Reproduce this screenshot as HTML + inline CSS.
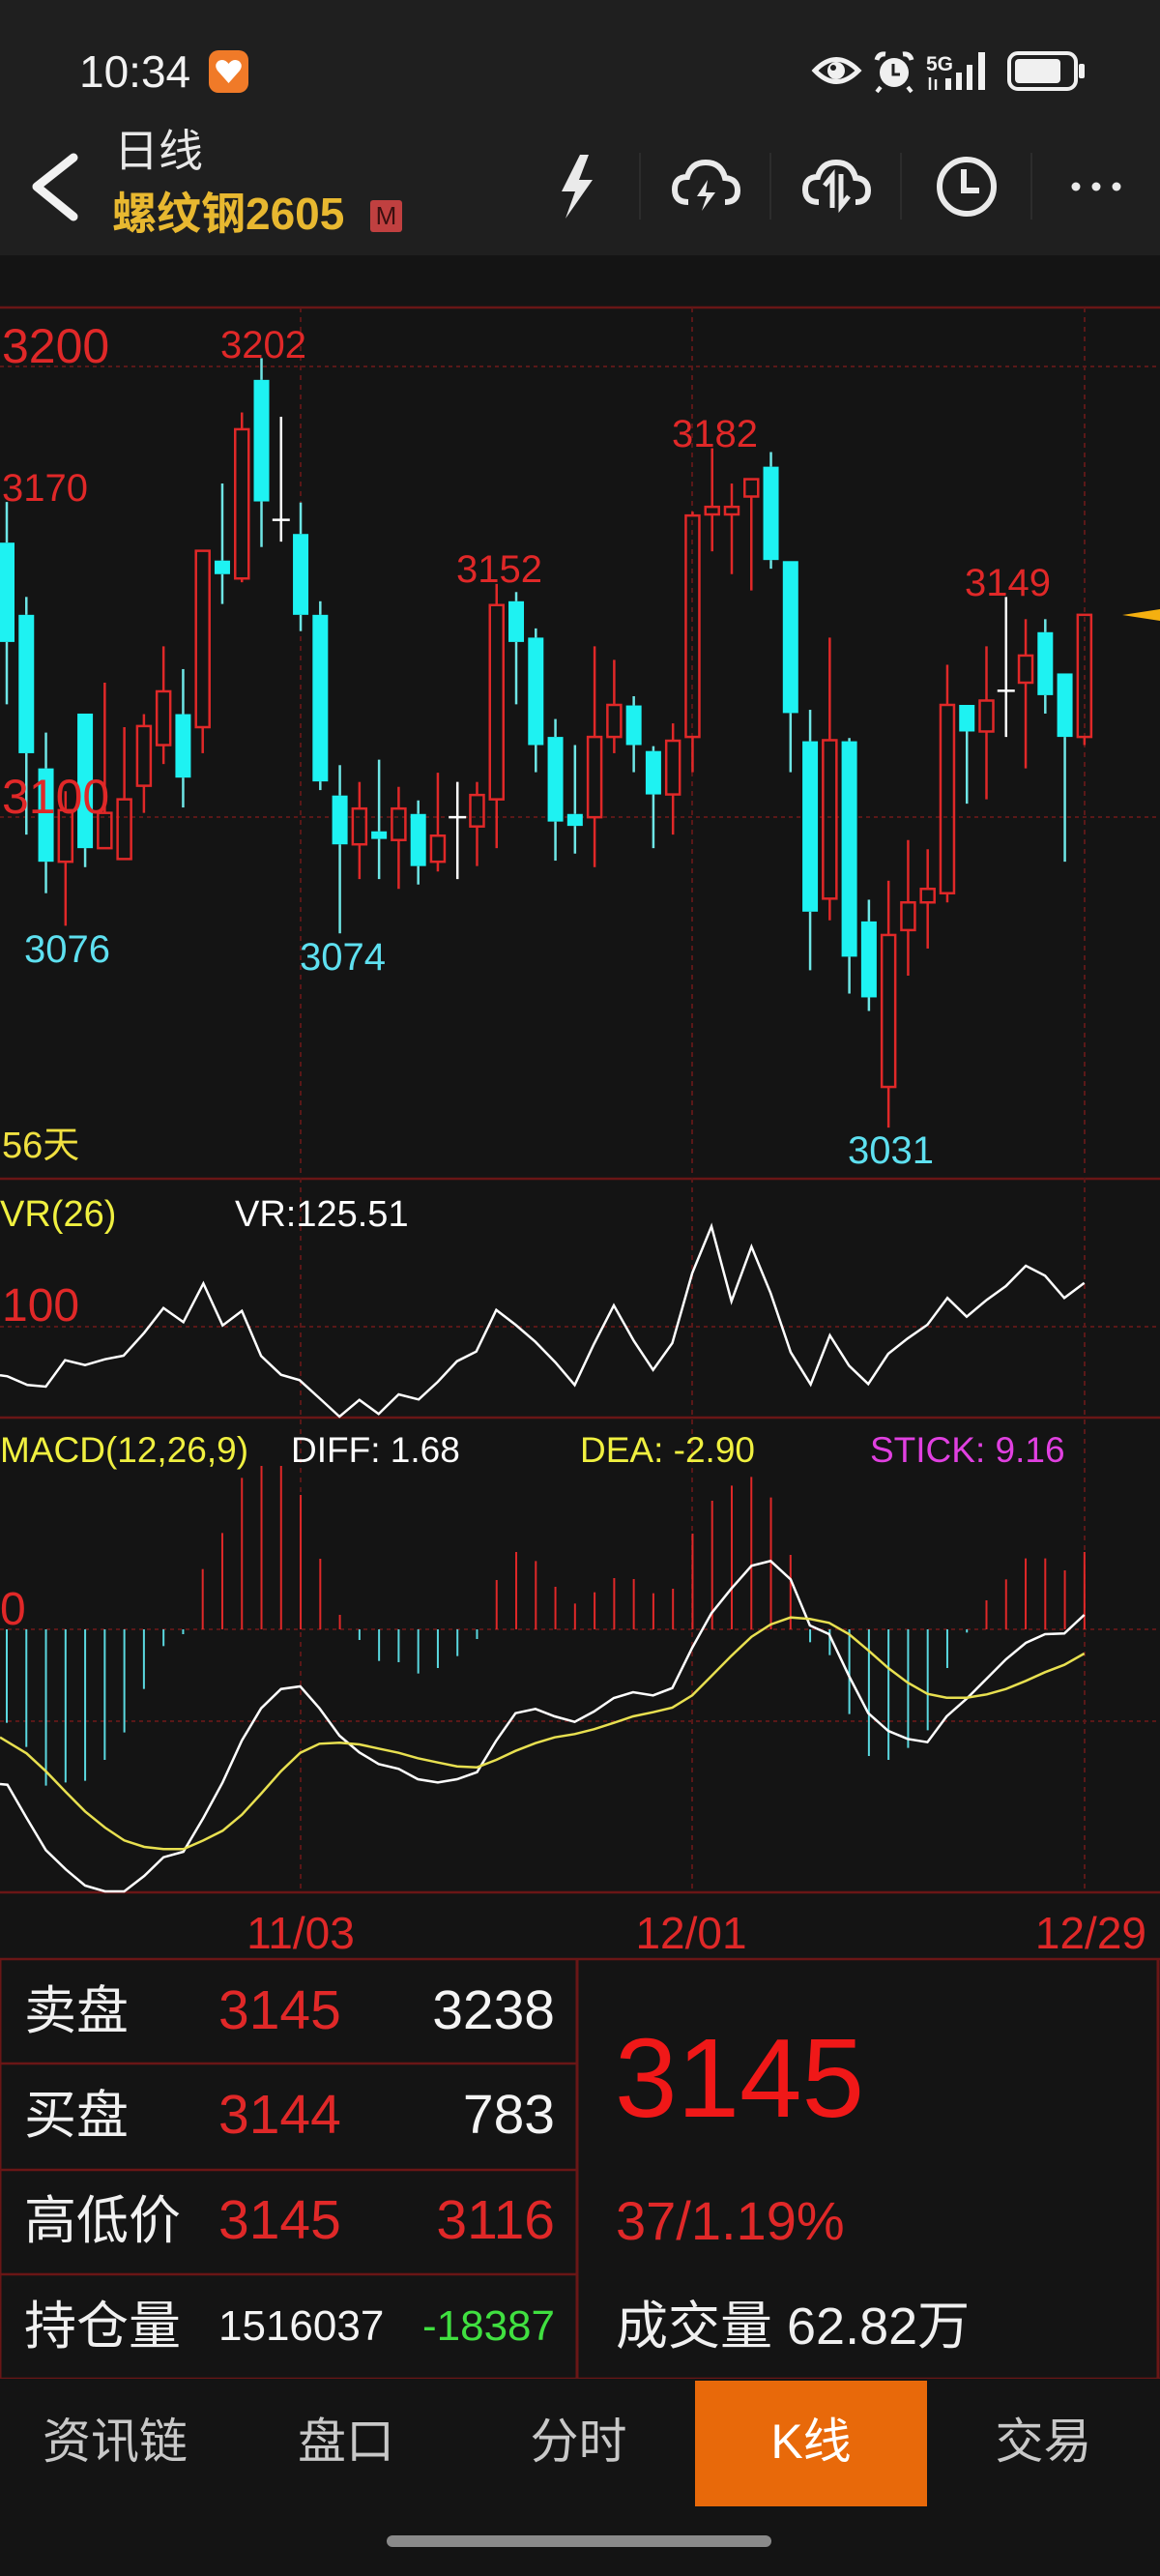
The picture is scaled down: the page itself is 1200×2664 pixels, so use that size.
<!DOCTYPE html>
<html><head><meta charset="utf-8">
<style>
*{margin:0;padding:0;box-sizing:border-box}
body{width:1200px;height:2664px;background:#141414;overflow:hidden;position:relative;font-family:"Liberation Sans","Noto Sans CJK SC",sans-serif}
.abs{position:absolute;white-space:nowrap}
#hdr{position:absolute;left:0;top:0;width:1200px;height:264px;background:#1f1f1f}
#nav{position:absolute;left:0;top:2460px;width:1200px;height:204px;background:#252525}
.tab{position:absolute;top:2462px;height:130px;line-height:126px;font-size:50px;color:#c8c8c8;text-align:center;font-family:"Liberation Sans","Noto Sans CJK SC",sans-serif}
</style></head><body>
<div id="hdr"></div>
<div class="abs" style="left:82px;top:44px;font-size:46px;color:#f2f2f2;line-height:60px">10:34</div>
<div class="abs" style="left:216px;top:52px;width:41px;height:44px;border-radius:10px;background:#f07a28"></div>
<svg class="abs" style="left:216px;top:52px" width="41" height="44" viewBox="0 0 41 44"><path d="M20.5 34 L9 21 Q5 15 10 11 Q16 8 20.5 14 Q25 8 31 11 Q36 15 32 21 Z" fill="#fff"/></svg>
<svg class="abs" style="left:830px;top:45px" width="300" height="56" viewBox="830 45 300 56">
<path d="M843 73 Q865 50 888 73 Q865 96 843 73 Z" fill="none" stroke="#f0f0f0" stroke-width="5"/>
<circle cx="865" cy="73" r="9" fill="#f0f0f0"/><circle cx="862" cy="70" r="3" fill="#1f1f1f"/>
<circle cx="925" cy="75" r="15" fill="#f0f0f0"/><path d="M924 66 V77 H931" stroke="#1f1f1f" stroke-width="3" fill="none"/>
<path d="M907 62 Q909 55 916 56 M943 62 Q941 55 934 56" stroke="#f0f0f0" stroke-width="5" fill="none"/>
<path d="M911 90 L907 95 M939 90 L943 95" stroke="#f0f0f0" stroke-width="4"/>
<text x="958" y="73" font-size="21" font-weight="bold" fill="#f0f0f0" font-family="Liberation Sans">5G</text>
<path d="M962 80 V93 M968 82 V93" stroke="#f0f0f0" stroke-width="2.5"/>
<rect x="978" y="81" width="6" height="12" fill="#f0f0f0"/><rect x="989" y="75" width="6" height="18" fill="#f0f0f0"/><rect x="1000" y="67" width="6" height="26" fill="#f0f0f0"/><rect x="1012" y="54" width="7" height="39" fill="#f0f0f0"/>
<rect x="1044" y="55" width="69" height="37" rx="9" fill="none" stroke="#f0f0f0" stroke-width="4"/>
<rect x="1050" y="61" width="47" height="25" rx="4" fill="#f0f0f0"/>
<rect x="1116" y="66" width="6" height="15" rx="2" fill="#f0f0f0"/>
</svg>
<svg class="abs" style="left:0;top:140px" width="1200" height="110" viewBox="0 140 1200 110">
<path d="M76 163 L38 193 L76 224" stroke="#f2f2f2" stroke-width="9" fill="none" stroke-linecap="round" stroke-linejoin="round"/>
<path d="M600 160 L581 198 L595 198 L585 226 L613 186 L599 186 L609 160 Z" fill="#eaeaea"/>
<g stroke="#2c2c2c" stroke-width="2"><path d="M662 158V227M797 158V227M932 158V227M1067 158V227"/></g>
<path d="M712 209 Q698 209 698 196 Q698 183 711 183 Q715 168 730 168 Q746 168 750 184 Q763 185 763 197 Q763 209 750 209" fill="none" stroke="#eaeaea" stroke-width="6"/>
<path d="M732 186 L721 203 L731 203 L726 218 L740 199 L730 199 Z" fill="#eaeaea"/>
<path d="M847 209 Q833 209 833 196 Q833 183 846 183 Q850 168 865 168 Q881 168 885 184 Q898 185 898 197 Q898 209 885 209" fill="none" stroke="#eaeaea" stroke-width="6"/>
<path d="M861 215 V182 L853 192 M870 180 V213 L878 203" fill="none" stroke="#eaeaea" stroke-width="5"/>
<circle cx="1000" cy="193" r="28" fill="none" stroke="#eaeaea" stroke-width="6"/>
<path d="M997 175 V197 H1013" fill="none" stroke="#eaeaea" stroke-width="6"/>
<circle cx="1113" cy="193" r="4.5" fill="#eaeaea"/><circle cx="1134" cy="193" r="4.5" fill="#eaeaea"/><circle cx="1155" cy="193" r="4.5" fill="#eaeaea"/>
</svg>
<div class="abs" style="left:118px;top:128px;font-size:46px;color:#e8e8e8;line-height:56px">日线</div>
<div class="abs" style="left:116px;top:193px;font-size:46px;color:#e8b830;font-weight:bold;line-height:56px">螺纹钢2605</div>
<div class="abs" style="left:383px;top:207px;width:33px;height:33px;background:#c04040;border-radius:3px;color:#3a1010;font-size:26px;line-height:33px;text-align:center">M</div>

<svg id="ch" class="abs" style="left:0;top:0" width="1200" height="2460" viewBox="0 0 1200 2460"></svg>

<div class="tab" style="left:0;width:238px">资讯链</div>
<div class="tab" style="left:238px;width:240px">盘口</div>
<div class="tab" style="left:478px;width:241px">分时</div>
<div class="abs" style="left:719px;top:2462px;width:240px;height:130px;background:#e8690a"></div>
<div class="tab" style="left:719px;width:240px;color:#fff">K线</div>
<div class="tab" style="left:959px;width:241px">交易</div>
<div class="abs" style="left:400px;top:2622px;width:398px;height:12px;border-radius:6px;background:#8a8a8a"></div>

<script>
var s='';
var R='#e02828',C='#1ef2f2';
function ln(x1,y1,x2,y2,c,w,d){s+='<line x1="'+x1+'" y1="'+y1+'" x2="'+x2+'" y2="'+y2+'" stroke="'+c+'" stroke-width="'+w+'"'+(d?' stroke-dasharray="'+d+'"':'')+'/>';}
function tx(x,y,t,c,fs,a){s+='<text x="'+x+'" y="'+y+'" fill="'+c+'" font-size="'+fs+'" font-family="Liberation Sans,Noto Sans CJK SC,sans-serif"'+(a?' text-anchor="'+a+'"':'')+'>'+t+'</text>';}
// panel borders
s+='<rect x="0" y="264" width="1200" height="1762" fill="#141414"/>';
[318,1219,1466,1957,2026].forEach(function(y){ln(0,y,1200,y,'#6a1616',2.5);});
[311,716,1122].forEach(function(x){ln(x,318,x,1957,'#5a1818',2,'5,5');});
[379,845,1372,1685,1780].forEach(function(y){ln(0,y,1200,y,'#5a1818',2,'4,4');});
// candles
var D=[[337,412,595,710,'c'],[512,545,800,950,'c'],[762,828,1000,1058,'c'],[870,905,1000,1118,'r'],[727,727,975,1010,'c'],[670,910,975,975,'r'],[752,885,995,995,'r'],[728,750,860,910,'r'],[603,686,785,820,'r'],[645,728,845,900,'c'],[425,427,752,800,'r'],[303,445,470,525,'c'],[172,203,478,485,'r'],[72,112,336,420,'c'],[180,370,372,410,'w'],[338,396,545,575,'c'],[520,545,852,868,'c'],[822,878,968,1132,'c'],[853,902,968,1032,'r'],[812,944,958,1032,'c'],[862,902,960,1050,'r'],[887,912,1008,1042,'c'],[836,952,1000,1018,'r'],[853,918,920,1032,'w'],[853,877,935,1008,'r'],[488,527,885,975,'r'],[503,520,595,710,'c'],[570,587,785,835,'c'],[737,770,926,998,'c'],[785,912,934,985,'c'],
[603,770,918,1010,'r'],[628,711,770,800,'r'],[695,712,785,835,'c'],[787,796,876,975,'c'],[745,777,876,950,'r'],[355,362,770,835,'r'],[238,346,360,428,'r'],[303,346,360,470,'r'],[295,295,327,500,'r'],[245,272,444,460,'c'],[446,446,726,835,'c'],[720,778,1092,1200,'c'],[587,776,1068,1108,'r'],[772,778,1175,1243,'c'],[1070,1110,1250,1275,'c'],[1035,1135,1415,1490,'r'],[960,1075,1126,1210,'r'],[977,1050,1075,1160,'r'],[637,711,1058,1075,'r'],[711,711,760,893,'c'],[603,703,760,885,'r'],[512,685,688,770,'w'],[553,620,670,828,'r'],[553,577,693,727,'c'],[653,653,770,1000,'c'],[545,545,770,785,'r']];
function Y(v){return 330+v/1.782;}
D.forEach(function(d,i){var x=7+i*20.27;var h=Y(d[0]),t=Y(d[1]),b=Y(d[2]),l=Y(d[3]);
 if(d[4]=='w'){ln(x,h,x,l,'#fff',2.5);ln(x-9,t,x+9,t,'#fff',2.5);return;}
 var c=d[4]=='r'?R:C;
 ln(x,h,x,t,d[4]=='r'?R:'#6ee6e6',2.5);ln(x,b,x,l,d[4]=='r'?R:'#6ee6e6',2.5);
 if(d[4]=='r')s+='<rect x="'+(x-7)+'" y="'+t+'" width="14" height="'+Math.max(b-t,2)+'" fill="none" stroke="'+R+'" stroke-width="2.5"/>';
 else s+='<rect x="'+(x-8)+'" y="'+t+'" width="16" height="'+Math.max(b-t,4)+'" fill="'+C+'"/>';
});
s+='<path d="M1161 636 L1200 630 L1200 642 Z" fill="#f5b010"/>';
tx(2,375,'3200',R,50);tx(2,841,'3100',R,50);tx(2,518,'3170',R,40);
tx(228,370,'3202',R,40);tx(472,602,'3152',R,40);tx(695,462,'3182',R,40);tx(998,616,'3149',R,40);
tx(25,995,'3076','#5ee0f0',40);tx(310,1003,'3074','#5ee0f0',40);tx(877,1203,'3031','#5ee0f0',40);
tx(2,1197,'56天','#f0e040',38);
// VR
tx(0,1268,'VR(26)','#f0f040',38);tx(243,1268,'VR:125.51','#fff',38);tx(2,1366,'100',R,48);
var V=[[0,637],[10,640],[37,667],[62,672],[88,590],[115,605],[142,587],[167,576],[195,505],[221,428],[248,472],[275,352],[301,482],[327,437],[353,577],[380,635],[405,652],[432,708],[459,765],[486,713],[512,757],[539,696],[566,712],[592,657],[618,593],[644,563],[671,434],[697,480],[724,533],[751,597],[777,667],[803,540],[830,420],[857,530],[883,620],[909,537],[936,320],[962,175],[989,407],[1016,238],[1042,382],[1069,565],[1096,665],[1122,513],[1148,607],[1174,664],[1201,570],[1227,523],[1254,480],[1281,397],[1307,455],[1334,403],[1360,360],[1387,297],[1413,328],[1439,397],[1466,350]];
s+='<polyline fill="none" stroke="#fff" stroke-width="2.5" points="'+V.map(function(p){return (p[0]/1.307).toFixed(1)+','+(1210+p[1]/3).toFixed(1);}).join(' ')+'"/>';
// MACD
tx(0,1512,'MACD(12,26,9)','#f0f040',37);tx(301,1512,'DIFF: 1.68','#fff',37);tx(600,1512,'DEA: -2.90','#f0f040',37);tx(900,1512,'STICK: 9.16','#e040e0',37);
tx(0,1680,'0',R,48);
var H=[965,1040,1160,1150,1145,1080,995,860,727,690,488,376,205,168,168,258,456,630,708,773,777,812,795,758,705,522,435,463,543,595,560,516,519,563,549,378,276,229,202,266,444,715,755,938,1068,1080,1043,988,795,685,585,520,455,455,492,435];
var z=1685;
H.forEach(function(h,i){var x=7+i*20.27;var y=1460+h/3;ln(x,z,x,y,y<z?R:'#5ad8e0',2);});
function pl(P,c){s+='<polyline fill="none" stroke="'+c+'" stroke-width="2.5" points="'+P.map(function(p){return (p[0]/1.307).toFixed(1)+','+(1460+p[1]/3).toFixed(1);}).join(' ')+'"/>';}
pl([[0,1155],[10,1157],[36,1260],[62,1360],[89,1420],[115,1470],[142,1488],[168,1488],[195,1440],[221,1382],[248,1365],[275,1260],[301,1150],[327,1020],[353,920],[380,860],[406,852],[432,920],[459,1005],[486,1057],[512,1093],[539,1108],[565,1140],[592,1150],[618,1140],[645,1118],[671,1020],[697,935],[724,922],[750,945],[777,962],[803,930],[830,888],[856,870],[883,880],[909,857],[936,732],[962,625],[989,548],[1016,478],[1042,463],[1069,520],[1095,663],[1121,690],[1148,820],[1174,935],[1201,990],[1227,1015],[1254,1025],[1280,945],[1307,890],[1334,828],[1360,768],[1387,717],[1413,690],[1439,688],[1466,630]],'#fff');
pl([[0,1010],[36,1060],[62,1115],[89,1180],[115,1240],[142,1290],[168,1330],[195,1350],[221,1357],[248,1357],[275,1330],[301,1300],[327,1250],[353,1185],[380,1115],[406,1058],[432,1030],[459,1027],[486,1032],[512,1045],[539,1058],[565,1075],[592,1088],[618,1100],[645,1103],[671,1080],[697,1052],[724,1028],[750,1010],[777,1000],[803,985],[830,965],[856,945],[883,932],[909,918],[936,880],[962,820],[989,757],[1016,698],[1042,660],[1069,638],[1095,643],[1121,655],[1148,690],[1174,740],[1201,795],[1227,840],[1254,875],[1280,887],[1307,887],[1334,877],[1360,860],[1387,835],[1413,808],[1439,785],[1466,750]],'#e8e050');
// dates
tx(311,2015,'11/03',R,46,'middle');tx(715,2015,'12/01',R,46,'middle');tx(1186,2015,'12/29',R,46,'end');
// table
ln(0,2026,0,2460,'#6a1616',3);ln(597,2026,597,2460,'#6a1616',3);ln(1198,2026,1198,2460,'#6a1616',3);
[2134,2244,2352].forEach(function(y){ln(0,y,597,y,'#6a1616',2.5);});
ln(0,2460,1200,2460,'#6a1616',2.5);
var F='Liberation Sans,Noto Sans CJK SC,sans-serif';
function t2(x,y,t,c,fs,a){tx(x,y,t,c,fs,a);}
t2(25,2098,'卖盘','#f0f0f0',54);t2(226,2098,'3145',R,57);t2(574,2098,'3238','#f4f4f4',57,'end');
t2(25,2206,'买盘','#f0f0f0',54);t2(226,2206,'3144',R,57);t2(574,2206,'783','#f4f4f4',57,'end');
t2(25,2315,'高低价','#f0f0f0',54);t2(226,2315,'3145',R,57);t2(574,2315,'3116',R,57,'end');
t2(25,2424,'持仓量','#f0f0f0',54);t2(226,2420,'1516037','#f4f4f4',44);t2(574,2420,'-18387','#40e040',44,'end');
t2(636,2189,'3145','#f01818',116);
t2(637,2316,'37/1.19%',R,56);
t2(637,2424,'成交量 62.82万','#f0f0f0',54);
document.getElementById('ch').innerHTML=s;
</script>
</body></html>
